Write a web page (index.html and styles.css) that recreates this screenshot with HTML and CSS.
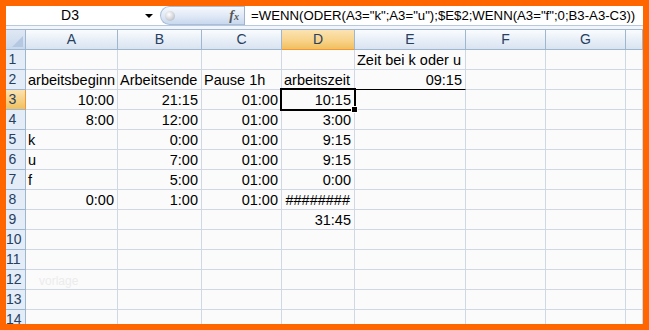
FILE: index.html
```html
<!DOCTYPE html>
<html lang="de">
<head>
    <meta charset="UTF-8">
    <title>arbeitszeit</title>
    <link rel="stylesheet" href="styles.css">
</head>
<body>
    <div class="frame">
        <div class="formula-bar">
            <div class="name-box">D3</div>
            <div class="name-arrow"><span class="tri"></span></div>
            <div class="grip">
                <span class="knob"></span>
                <span class="fx"><i>f</i><span class="x">x</span></span>
            </div>
            <div class="formula">=WENN(ODER(A3="k";A3="u");$E$2;WENN(A3="f";0;B3-A3-C3))</div>
        </div>
        <div class="spacer"></div>

        <div class="sheet-head cols">
            <div class="corner"><span class="corner-tri"></span></div>
            <div class="col-head">A</div>
            <div class="col-head">B</div>
            <div class="col-head">C</div>
            <div class="col-head active">D</div>
            <div class="col-head">E</div>
            <div class="col-head">F</div>
            <div class="col-head">G</div>
            <div class="col-head"></div>
        </div>

        <div class="sheet cols" id="sheet"></div>
    </div>

    <script>
        // Zelleninhalt: [text, ausrichtung] je Spalte A..H
        const rows = [
            [, , , , ['Zeit bei k oder u', 'l']],
            [['arbeitsbeginn', 'l'], ['Arbeitsende', 'l'], ['Pause 1h', 'l'], ['arbeitszeit', 'l'], ['09:15', 'r']],
            [['10:00', 'r'], ['21:15', 'r'], ['01:00', 'r'], ['10:15', 'r']],
            [['8:00', 'r'], ['12:00', 'r'], ['01:00', 'r'], ['3:00', 'r']],
            [['k', 'l'], ['0:00', 'r'], ['01:00', 'r'], ['9:15', 'r']],
            [['u', 'l'], ['7:00', 'r'], ['01:00', 'r'], ['9:15', 'r']],
            [['f', 'l'], ['5:00', 'r'], ['01:00', 'r'], ['0:00', 'r']],
            [['0:00', 'r'], ['1:00', 'r'], ['01:00', 'r'], ['########', 'r']],
            [, , , ['31:45', 'r']],
            [], [], [], [], []
        ];

        const sheet = document.getElementById('sheet');
        rows.forEach((row, r) => {
            const head = document.createElement('div');
            head.className = 'row-head' + (r === 2 ? ' active' : '');
            head.textContent = r + 1;
            sheet.appendChild(head);

            for (let c = 0; c < 8; c++) {
                const cell = document.createElement('div');
                cell.className = 'cell';
                const val = row[c];
                if (val) {
                    cell.textContent = val[0];
                    cell.classList.add(val[1] === 'r' ? 'right' : 'left');
                }
                if (r === 2 && c === 3) cell.classList.add('selected');
                if (r === 1 && c === 4) cell.classList.add('underline');
                if (r === 7 && c === 3) cell.classList.add('hashes');
                if (r === 11 && c === 0) {
                    cell.innerHTML = '<span class="watermark">vorlage</span>';
                }
                sheet.appendChild(cell);
            }
        });
    </script>
</body>
</html>
```

FILE: styles.css
```css
body {
    margin: 0;
    font-family: "Liberation Sans", Arial, sans-serif;
}
.frame {
    width: 649px;
    height: 330px;
    box-sizing: border-box;
    border: 6px solid #ff6600;
    overflow: hidden;
    background: #fbfbfb;
}
.formula-bar {
    display: flex;
    height: 19px;
    background: #ffffff;
    border-bottom: 1px solid #b8c9de;
}
.name-box {
    width: 128px;
    text-align: center;
    font-size: 14px;
    line-height: 19px;
    color: #000;
}
.name-arrow {
    width: 24px;
    display: flex;
    align-items: center;
    justify-content: center;
}
.tri {
    width: 0;
    height: 0;
    border-left: 4px solid transparent;
    border-right: 4px solid transparent;
    border-top: 4px solid #000;
    margin-left: 6px;
}
.grip {
    width: 84px;
    box-sizing: border-box;
    margin-left: 2px;
    display: flex;
    align-items: center;
    justify-content: space-between;
    padding: 0 5px 0 4px;
    border: 1px solid #a9bed8;
    border-right: none;
    border-radius: 10px 0 0 10px;
    background: linear-gradient(#f6f9fd, #dfe8f5 55%, #c8d8ee);
}
.knob {
    width: 10px;
    height: 10px;
    border-radius: 50%;
    background: radial-gradient(circle at 40% 35%, #ffffff, #c3c7cd 70%, #9aa1aa);
}
.fx {
    font-family: "Liberation Serif", serif;
    color: #555;
    font-size: 14px;
    font-weight: bold;
}
.fx .x {
    font-size: 10px;
    font-style: italic;
}
.formula {
    flex: 1;
    border-left: 1px solid #9fb3cc;
    padding-left: 6px;
    font-size: 13.2px;
    line-height: 19px;
    white-space: nowrap;
    color: #000;
}
.spacer {
    height: 3px;
    background: #f2f6fb;
}
.cols {
    display: grid;
    grid-template-columns: 20px 92px 84px 80px 73px 111px 80px 80px 17px;
}
.sheet-head {
    height: 21px;
    box-sizing: border-box;
    border-top: 1px solid #a3b8d2;
}
.corner {
    position: relative;
    background: linear-gradient(#dfe8f4, #c9d8ec);
    border-right: 1px solid #9eb6ce;
    border-bottom: 1px solid #9eb6ce;
}
.corner-tri {
    position: absolute;
    right: 2px;
    bottom: 2px;
    width: 0;
    height: 0;
    border-left: 11px solid transparent;
    border-bottom: 11px solid #b5c8e2;
}
.col-head {
    background: linear-gradient(#fafcfe, #e7eef7 55%, #d9e3f1);
    border-right: 1px solid #9eb6ce;
    border-bottom: 1px solid #9eb6ce;
    text-align: center;
    font-size: 14px;
    line-height: 19px;
    color: #27405f;
}
.col-head.active {
    background: linear-gradient(#fbe3b2, #f8d38a 55%, #f1c05f);
    border-bottom-color: #f29536;
}
.row-head {
    height: 20px;
    box-sizing: border-box;
    background: #e4ecf7;
    border-right: 1px solid #9eb6ce;
    border-bottom: 1px solid #9eb6ce;
    padding-right: 6px;
    text-align: center;
    font-size: 14px;
    line-height: 19px;
    color: #27405f;
}
.row-head.active {
    background: linear-gradient(#fbe3b2, #f1c05f);
    border-right-color: #f29536;
}
.cell {
    position: relative;
    height: 20px;
    box-sizing: border-box;
    border-right: 1px solid #d0d7e5;
    border-bottom: 1px solid #d0d7e5;
    padding: 0 3px 0 2px;
    font-size: 14.5px;
    line-height: 20px;
    white-space: nowrap;
    color: #000;
}
.right {
    text-align: right;
}
.hashes {
    padding-right: 4px;
}
.underline {
    border-bottom-color: #000;
}
.selected::after {
    content: "";
    position: absolute;
    left: -2px;
    top: -2px;
    right: -2px;
    bottom: -2px;
    border: 2px solid #000;
    z-index: 1;
}
.selected::before {
    content: "";
    position: absolute;
    right: -4px;
    bottom: -4px;
    width: 5px;
    height: 5px;
    background: #000;
    border: 1px solid #fff;
    z-index: 2;
}
.watermark {
    padding-left: 11px;
    font-size: 12px;
    color: #ececec;
}
```
